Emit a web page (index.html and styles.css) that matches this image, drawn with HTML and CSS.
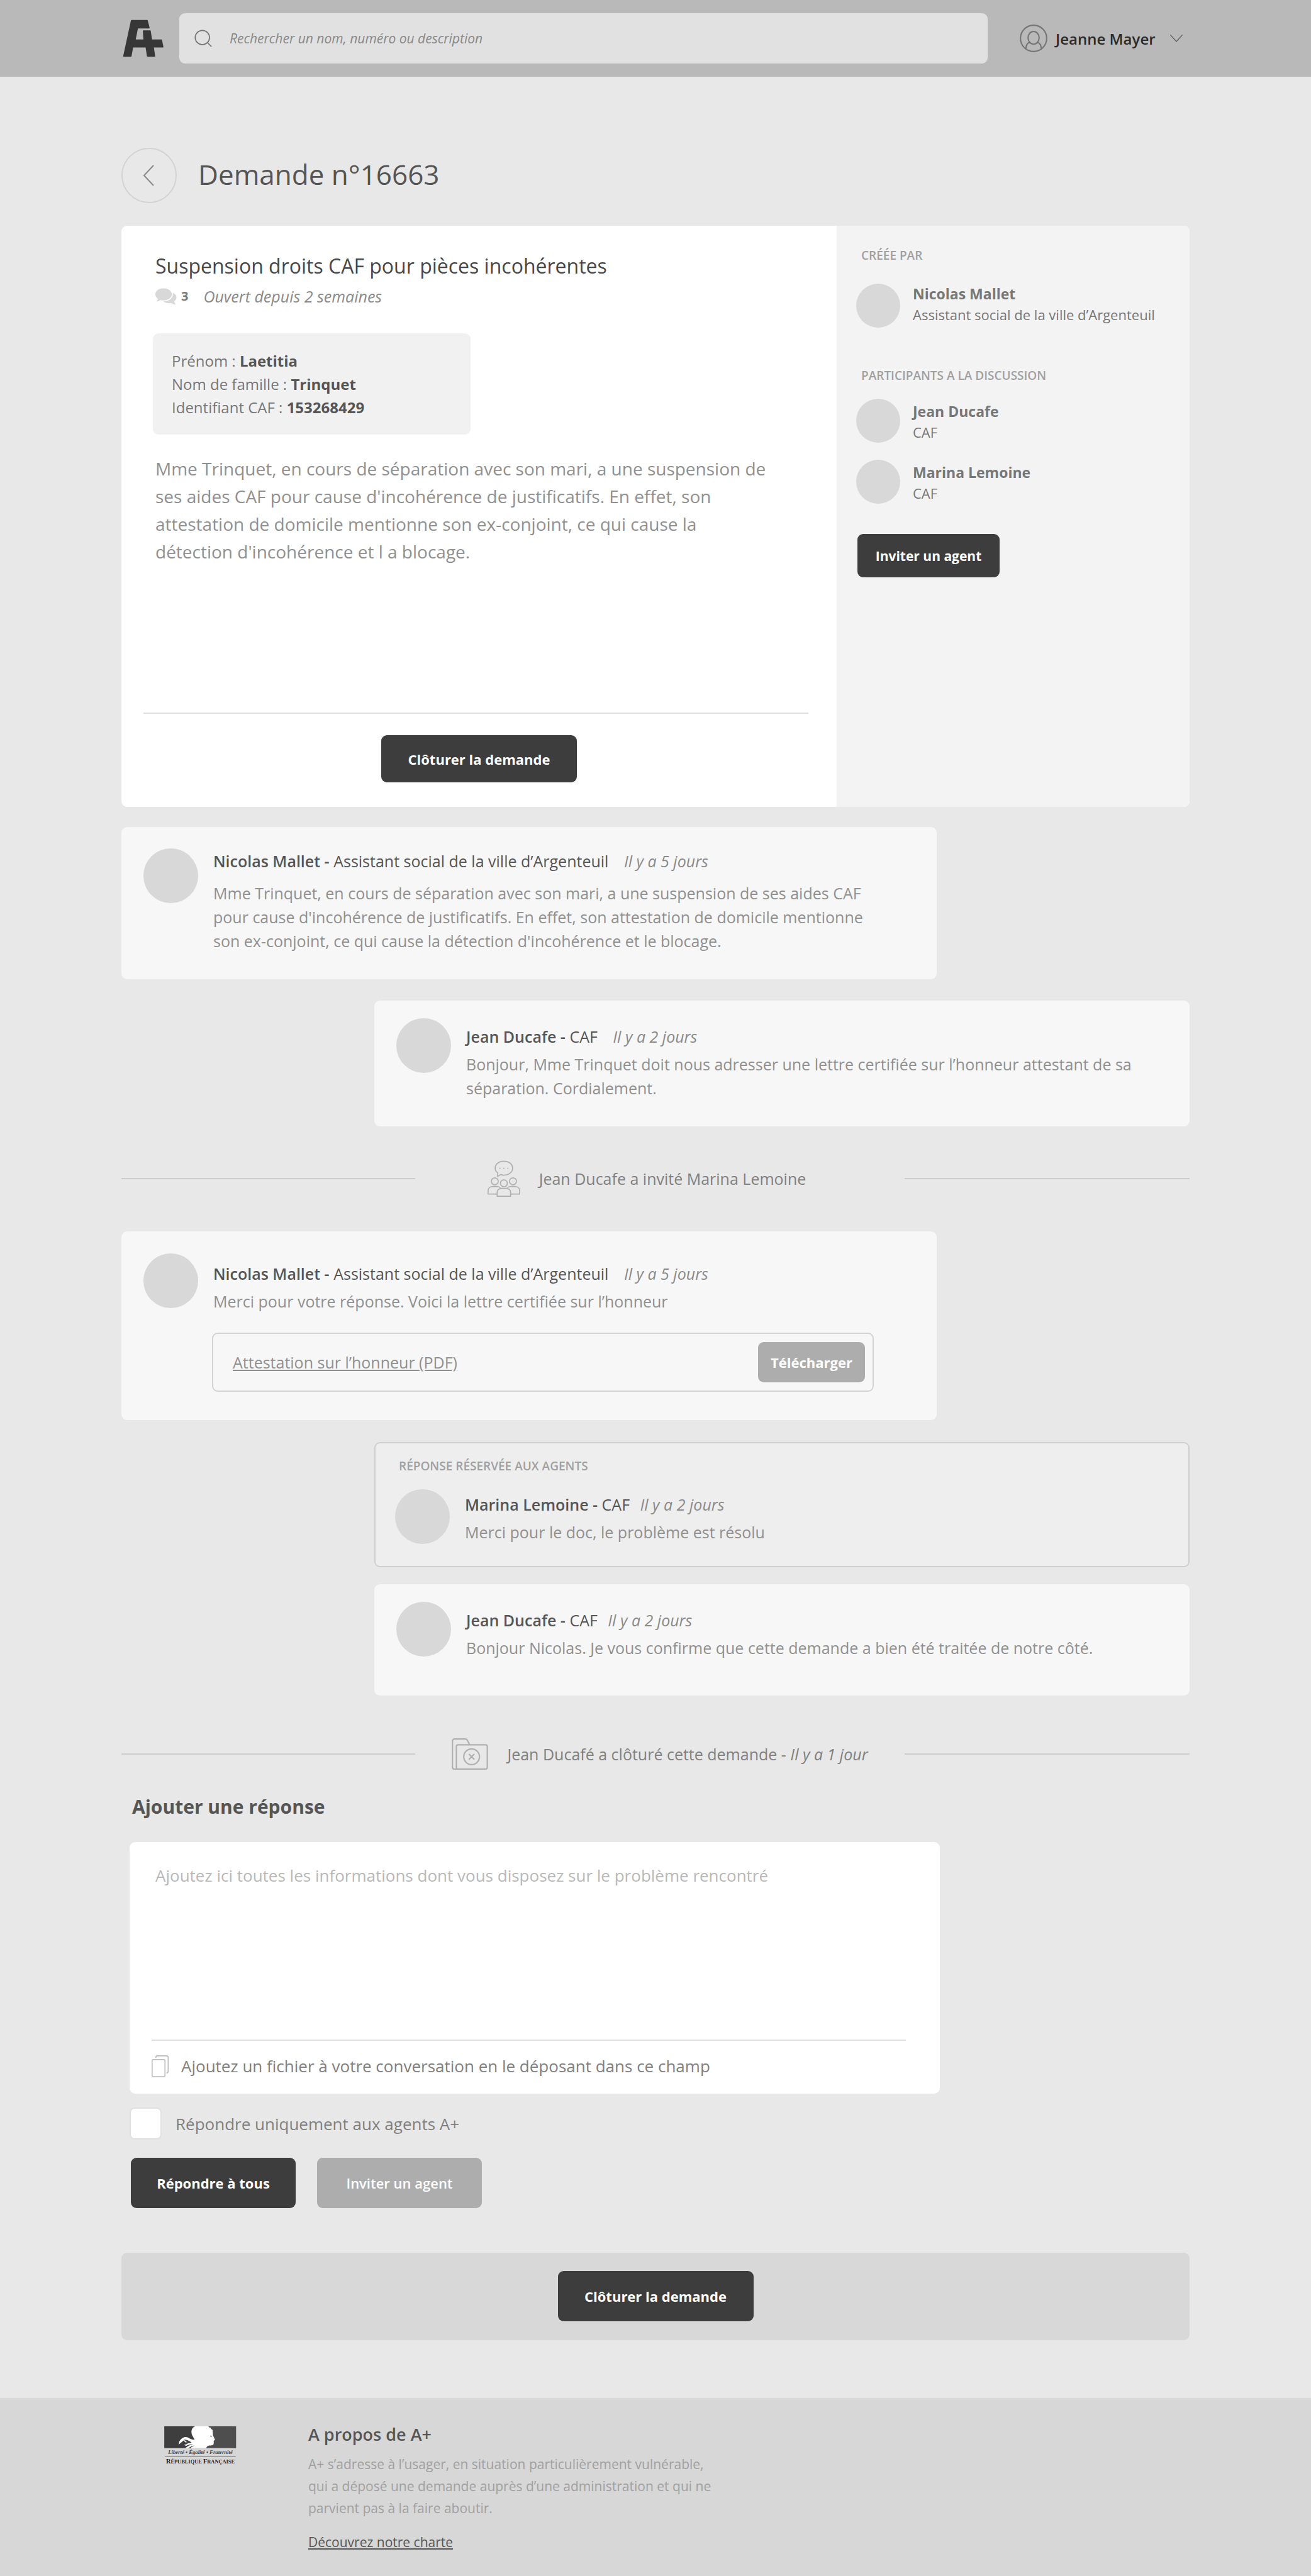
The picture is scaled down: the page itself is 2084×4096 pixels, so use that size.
FILE: index.html
```html
<!DOCTYPE html>
<html lang="fr">
<head>
<meta charset="utf-8">
<meta name="viewport" content="width=device-width, initial-scale=1">
<title>Demande n°16663 – A+</title>
<link rel="stylesheet" href="styles.css">
</head>
<body>
<header class="topbar">
  <div class="container topbar-inner">
    <a class="logo" href="#" aria-label="A+">
      <svg width="66" height="60" viewBox="-1 -1 77 70"><path d="M15.3 1H44.5L48 14.5H26.5L22 37H38.5L37.4 20H50L52.6 37H71L73.6 50H55.7L58.3 67H45L42.4 50H17.6L14.4 67H1Z" fill="#373737" stroke="#373737" stroke-width="2" stroke-linejoin="round"/></svg>
    </a>
    <label class="search">
      <svg width="28" height="28" viewBox="0 0 32 32" fill="none" stroke="#757575" stroke-width="2"><circle cx="14.5" cy="14.5" r="13"/><path d="M24 24l7 7"/></svg>
      <input type="search" placeholder="Rechercher un nom, numéro ou description" aria-label="Rechercher">
    </label>
    <button class="user" type="button">
      <svg width="44" height="44" viewBox="0 0 50 50" fill="none" stroke="#757575" stroke-width="2.4"><circle cx="25" cy="25" r="23.7"/><ellipse cx="25" cy="24" rx="10" ry="11.5"/><path d="M11 43.500c.5-6 3-10.500 7-11.500M39 43.500c-.5-6-3-10.500-7-11.500"/></svg>
      <span>Jeanne Mayer</span>
      <svg class="user-caret" width="20" height="12" viewBox="0 0 20 12" fill="none" stroke="#5f5f5f" stroke-width="1.2"><path d="M.5.5L10 11 19.500.5"/></svg>
    </button>
  </div>
</header>

<main class="container page">
  <div class="page-head">
    <a class="back" href="#" aria-label="Retour"><svg width="18" height="34" viewBox="0 0 18 34" fill="none" stroke="#8a8a8a" stroke-width="2"><path d="M17 1L2 17l15 16"/></svg></a>
    <h1>Demande n°16663</h1>
  </div>

  <section class="request">
    <div class="request-main">
      <div class="request-body">
        <h2>Suspension droits CAF pour pièces incohérentes</h2>
        <p class="request-meta">
          <svg width="34" height="27" viewBox="0 0 39 30" fill="#d8d8d8"><path d="M15 0C23.500 0 30 4.800 30 11S23.500 22 15 22c-2 0-4-.3-5.700-.8C7 22.800 4.500 23.800 1.800 24c1.500-1.500 2.600-3.200 3-5C1.800 17 0 14.200 0 11 0 4.800 6.500 0 15 0z"/><path d="M32 8.500c4 1.700 6.500 4.600 6.500 8 0 2.900-1.600 5.400-4.200 7.200.4 2.300 1.300 4.300 2.700 6.300-3.200-.4-5.800-1.700-8-3.200-1.300.3-2.700.4-4 .4-4.200 0-8-1.200-10.500-3.200C24 24 32 18.500 32 11z"/></svg>
          <strong>3</strong><em>Ouvert depuis 2 semaines</em>
        </p>
        <dl class="identity">
          <div><dt>Prénom :</dt> <dd>Laetitia</dd></div>
          <div><dt>Nom de famille :</dt> <dd>Trinquet</dd></div>
          <div><dt>Identifiant CAF :</dt> <dd>153268429</dd></div>
        </dl>
        <p class="request-text">Mme Trinquet, en cours de séparation avec son mari, a une suspension de<br>ses aides CAF pour cause d'incohérence de justificatifs. En effet, son<br>attestation de domicile mentionne son ex-conjoint, ce qui cause la<br>détection d'incohérence et l a blocage.</p>
      </div>
      <div class="request-actions"><button class="btn btn-wide" type="button">Clôturer la demande</button></div>
    </div>
    <aside class="request-side">
      <h3 class="label">CRÉÉE PAR</h3>
      <div class="person author"><span class="avatar"></span><p><strong>Nicolas Mallet</strong><span>Assistant social de la ville d’Argenteuil</span></p></div>
      <h3 class="label">PARTICIPANTS A LA DISCUSSION</h3>
      <div class="people">
        <div class="person"><span class="avatar"></span><p><strong>Jean Ducafe</strong><span>CAF</span></p></div>
        <div class="person"><span class="avatar"></span><p><strong>Marina Lemoine</strong><span>CAF</span></p></div>
      </div>
      <button class="btn btn-small" type="button">Inviter un agent</button>
    </aside>
  </section>

  <article class="message message-first">
    <span class="avatar avatar-large"></span>
    <div class="message-content">
      <h3><strong>Nicolas Mallet -</strong> Assistant social de la ville d’Argenteuil <em>Il y a 5 jours</em></h3>
      <p>Mme Trinquet, en cours de séparation avec son mari, a une suspension de ses aides CAF<br>pour cause d'incohérence de justificatifs. En effet, son attestation de domicile mentionne<br>son ex-conjoint, ce qui cause la détection d'incohérence et le blocage.</p>
    </div>
  </article>

  <article class="message message-right">
    <span class="avatar avatar-large"></span>
    <div class="message-content">
      <h3><strong>Jean Ducafe -</strong> CAF <em>Il y a 2 jours</em></h3>
      <p>Bonjour, Mme Trinquet doit nous adresser une lettre certifiée sur l’honneur attestant de sa<br>séparation. Cordialement.</p>
    </div>
  </article>

  <div class="event event-invite">
    <p>
      <svg width="52" height="58" viewBox="36 45 180 200" fill="#e8e8e8" stroke="#b0b0b0" stroke-width="6" stroke-linejoin="round"><path d="M92 114C82 107 78 98 78 88c0-22 21-39 48-39s48 17 48 39-21 38-48 38c-7 0-12-1-19-3-5 5-10 8-17 10 2-5 3-11 2-19z"/><path d="M101 88h6M123 88h6M145 88h6"/><circle cx="76" cy="160" r="19"/><circle cx="176" cy="160" r="19"/><path d="M39 230v-18c0-15 12-23 26-23h22c14 0 26 8 26 23v18zM213 230v-18c0-15-12-23-26-23h-22c-14 0-26 8-26 23v18z"/><circle cx="126" cy="171" r="19"/><path d="M89 242v-22c0-12 10-21 24-21h26c14 0 24 9 24 21v22z"/></svg>
      <span>Jean Ducafe a invité Marina Lemoine</span>
    </p>
  </div>

  <article class="message message-file">
    <span class="avatar avatar-large"></span>
    <div class="message-content">
      <h3><strong>Nicolas Mallet -</strong> Assistant social de la ville d’Argenteuil <em>Il y a 5 jours</em></h3>
      <p>Merci pour votre réponse. Voici la lettre certifiée sur l’honneur</p>
      <div class="attachment"><a href="#">Attestation sur l’honneur (PDF)</a><button class="btn btn-muted btn-download" type="button">Télécharger</button></div>
    </div>
  </article>

  <article class="message message-right message-private">
    <h4 class="label">RÉPONSE RÉSERVÉE AUX AGENTS</h4>
    <span class="avatar avatar-large"></span>
    <div class="message-content">
      <h3><strong>Marina Lemoine -</strong> CAF <em>Il y a 2 jours</em></h3>
      <p>Merci pour le doc, le problème est résolu</p>
    </div>
  </article>

  <article class="message message-right message-last">
    <span class="avatar avatar-large"></span>
    <div class="message-content">
      <h3><strong>Jean Ducafe -</strong> CAF <em>Il y a 2 jours</em></h3>
      <p>Bonjour Nicolas. Je vous confirme que cette demande a bien été traitée de notre côté.</p>
    </div>
  </article>

  <div class="event event-close">
    <p>
      <svg width="58" height="50" viewBox="0 0 67 58" fill="none" stroke="#b0b0b0" stroke-width="2.500" stroke-linejoin="round"><path d="M33 12L29 4c-1-2-2-2.700-4-2.700H5c-2 0-3.700 1.500-3.700 3.700v48c0 2 1.500 3.700 3.700 3.700"/><rect x="8.500" y="12" width="57" height="44.700" rx="3"/><path d="M5 56.700h5"/><circle cx="36.600" cy="34" r="14.500"/><path d="M31.600 29l10 10M41.600 29l-10 10"/></svg>
      <span>Jean Ducafé a clôturé cette demande - <em>Il y a 1 jour</em></span>
    </p>
  </div>

  <form class="reply">
    <h2>Ajouter une réponse</h2>
    <div class="editor">
      <textarea aria-label="Votre réponse" placeholder="Ajoutez ici toutes les informations dont vous disposez sur le problème rencontré"></textarea>
      <p class="drop">
        <svg width="28" height="35" viewBox="0 0 33 41" fill="none" stroke="#bdbdbd" stroke-width="2"><path d="M8 5V4a3 3 0 0 1 3-3h17a3 3 0 0 1 3 3v26a3 3 0 0 1-3 3"/><rect x="1" y="8" width="24" height="32" rx="2"/></svg>
        Ajoutez un fichier à votre conversation en le déposant dans ce champ
      </p>
    </div>
    <label class="check"><input type="checkbox">Répondre uniquement aux agents A+</label>
    <div class="reply-actions">
      <button class="btn" type="submit">Répondre à tous</button>
      <button class="btn btn-muted" type="button">Inviter un agent</button>
    </div>
  </form>

  <div class="closing"><button class="btn btn-wide" type="button">Clôturer la demande</button></div>
</main>

<footer class="footer">
  <div class="container footer-inner">
    <svg class="marianne" width="115" height="62" viewBox="30 42 396 214">
      <path d="M30 42h220v120H30z" fill="#3e3e3e"/><path d="M250 42h174v120H250z" fill="#4e4e4e"/>
      <path d="M200 42h72c3 5 7 7 14 9-2 3-1 6 8 10 4 4-1 8 2 13l1 16c3 9 8 16 11 25 1 5-5 3-7 6 2 4-2 5 1 8-2 3 0 6-1 10-2 8-14 9-24 8-9 1-14 5-17 15h-78c-8 0-9-2-3-5l16-10c-16 3-24 9-33 15h-18c12-8 25-17 45-23-15 1-28 5-40 11l-10-6 22-6c-10-3-19-9-24-19l-28 23 3-16c6-12 16-21 26-24 14-4 21 0 32 7 13 5 24 9 26 4-8-14-17-25-17-39 0-16 8-28 21-32z" fill="#fff"/>
      <path d="M136 116c12-3 24 2 44 14-12 7-25 4-35-3 8-1 10-3 9-5-5 0-12-2-18-6zM118 142l14-14 8 12c-9-2-15 0-22 2z" fill="#3e3e3e"/>
      <path d="M281 94c5-2 10 0 13 3l-5 1v5l-6-5z" fill="#8a8a8a"/>
      <text x="228" y="195" text-anchor="middle" font-size="30" font-style="italic" font-weight="700" fill="#444">Liberté • Égalité • Fraternité</text>
      <path d="M34 209h388" stroke="#555" stroke-width="3"/>
      <text x="228" y="246" text-anchor="middle" font-size="29" font-weight="700" fill="#1c1c1c"><tspan font-size="36">R</tspan>ÉPUBLIQUE <tspan font-size="36">F</tspan>RANÇAISE</text>
    </svg>
    <div class="about">
      <h2>A propos de A+</h2>
      <p>A+ s’adresse à l’usager, en situation particulièrement vulnérable,<br>qui a déposé une demande auprès d’une administration et qui ne<br>parvient pas à la faire aboutir.</p>
      <a href="#">Découvrez notre charte</a>
    </div>
  </div>
</footer>
</body>
</html>
```
FILE: styles.css
```css
*, *::before, *::after { box-sizing: border-box; }

body {
  margin: 0;
  background: #e8e8e8;
  color: #8a8a8a;
  font-family: "Open Sans", "Noto Sans", sans-serif;
  font-size: 25px;
  font-weight: 500;
}

h1, h2, h3, h4, p, dl, dd { margin: 0; }
h1, h2, h3, h4 { font-weight: 500; }
svg { display: block; flex: none; }
button, input, textarea { font: inherit; }

.container {
  width: 100%;
  max-width: 1698px;
  margin: 0 auto;
}

/* Top bar */
.topbar { background: #b9b9b9; padding: 21px 0; }
.topbar-inner { display: flex; align-items: center; }
.logo { padding: 0 24px 0 2px; }
.search {
  flex: 1;
  display: flex;
  align-items: center;
  gap: 28px;
  height: 80px;
  padding: 0 24px;
  background: #e1e1e1;
  border-radius: 9px;
}
.search input {
  flex: 1;
  min-width: 0;
  padding: 0;
  border: 0;
  outline: 0;
  background: none;
  color: #555;
  font-size: 21px;
  font-style: italic;
}
.search input::placeholder { color: #888; opacity: 1; }
.user {
  display: flex;
  align-items: center;
  gap: 13px;
  width: 270px;
  margin-left: 51px;
  padding: 0 11px 0 0;
  border: 0;
  background: none;
  color: #2b2b2b;
  font-size: 24px;
  font-weight: 600;
}
.user-caret { margin-left: auto; }

/* Page heading */
.page { padding-top: 113px; }
.page-head { display: flex; align-items: center; gap: 34px; }
.page-head h1 { padding-bottom: 4px; color: #555; font-size: 44px; font-weight: 400; }
.back {
  display: flex;
  align-items: center;
  justify-content: center;
  width: 88px;
  height: 88px;
  padding-right: 2px;
  border: 2px solid #d3d3d3;
  border-radius: 50%;
}

/* Buttons */
.btn {
  min-width: 262px;
  height: 80px;
  padding: 0 20px;
  border: 0;
  border-radius: 9px;
  background: #3d3d3d;
  color: #fff;
  font-size: 22px;
  font-weight: 700;
}
.btn-wide { min-width: 311px; }
.btn-small { min-width: 226px; height: 69px; font-size: 21px; }
.btn-muted { background: #adadad; font-weight: 600; }
.btn-download { min-width: 170px; height: 64px; font-weight: 700; }

.label {
  color: #a0a0a0;
  font-size: 19px;
  font-weight: 600;
  line-height: 24px;
}

.avatar {
  flex: none;
  width: 70px;
  height: 70px;
  border-radius: 50%;
  background: #d8d8d8;
}
.avatar-large { width: 87px; height: 87px; }

/* Request card */
.request {
  display: flex;
  margin-top: 36px;
  border-radius: 9px;
  overflow: hidden;
  background: #fff;
}
.request-main { flex: 1; padding: 44px 45px 39px 35px; }
.request-body { padding-left: 19px; }
.request-body h2 { color: #474747; font-size: 32px; line-height: 40px; }
.request-meta {
  display: flex;
  align-items: center;
  gap: 7px;
  margin-top: 10px;
  line-height: 36px;
}
.request-meta strong { font-size: 20px; color: #777; }
.request-meta em { margin-left: 17px; }
.identity {
  width: 505px;
  margin: 41px 0 0 -4px;
  padding: 25px 30px;
  border-radius: 9px;
  background: #f1f1f1;
  color: #777;
  font-size: 24px;
  line-height: 37px;
}
.identity dt, .identity dd { display: inline; }
.identity dd { color: #555; font-weight: 700; }
.request-text {
  min-height: 410px;
  margin-top: 32px;
  color: #909090;
  font-size: 28px;
  line-height: 44px;
}
.request-actions {
  display: flex;
  justify-content: center;
  padding-top: 34px;
  border-top: 2px solid #e0e0e0;
}
.request-actions .btn { height: 75px; margin-left: 10px; }

.request-side {
  width: 561px;
  padding: 35px 31px;
  background: #f3f3f3;
}
.request-side .label { padding-left: 8px; }
.person { display: flex; align-items: flex-end; gap: 20px; }
.person p { color: #777; font-size: 22px; line-height: 33px; }
.person strong { display: block; font-size: 23px; }
.author { align-items: flex-start; margin: 33px 0 64px; }
.people { display: grid; gap: 27px; margin: 25px 0 48px; }
.request-side .btn { margin-left: 2px; }

/* Conversation */
.message {
  display: flex;
  align-items: flex-start;
  gap: 24px;
  max-width: 1296px;
  margin-top: 34px;
  padding: 28px 35px 42px;
  border-radius: 9px;
  background: #f7f7f7;
}
.message-content { flex: 1; padding-top: 11px; }
.message h3 { color: #555; font-size: 25px; line-height: 36px; }
.message h3 strong { font-weight: 600; }
.message h3 em { margin-left: 18px; color: #8a8a8a; }
.message-content p { margin-top: 7px; color: #909090; line-height: 38px; }
.message-right { margin-left: auto; }

.message-first { margin-top: 32px; padding-top: 34px; }
.message-first .message-content { padding-top: 2px; }
.message-first .message-content p { margin-top: 14px; }

.message-file { margin-top: 55px; padding: 35px 35px 45px; }
.message-file .message-content { padding-top: 14px; }
.attachment {
  display: flex;
  align-items: center;
  justify-content: space-between;
  height: 94px;
  margin: 31px 65px 0 -2px;
  padding: 0 12px 0 31px;
  border: 2px solid #d3d3d3;
  border-radius: 9px;
}
.attachment a { color: #909090; }

.message-private {
  flex-wrap: wrap;
  margin-top: 35px;
  padding: 24px 31px 35px;
  border: 2px solid #cfcfcf;
  background: #eee;
}
.message-private .label { width: 100%; padding-left: 6px; margin-bottom: 1px; }
.message-private .message-content { padding-top: 6px; }
.message-last { margin-top: 27px; padding-bottom: 57px; }
.message-private h3 em, .message-last h3 em { margin-left: 10px; }

/* Events between messages */
.event {
  display: grid;
  grid-template-columns: 467fr 778fr 453fr;
  align-items: center;
  height: 58px;
  margin-top: 54px;
}
.event::before, .event::after { content: ""; height: 2px; background: #cdcdcd; }
.event p { display: flex; align-items: center; justify-content: center; gap: 30px; color: #808080; }
.event-invite p { padding-right: 42px; }
.event-close { margin-top: 64px; }

/* Reply form */
.reply { max-width: 1301px; margin-top: 35px; padding-left: 13px; }
.reply h2 { padding-left: 4px; color: #555; font-size: 30px; font-weight: 700; line-height: 40px; }
.editor {
  margin-top: 36px;
  padding: 0 54px 0 35px;
  border-radius: 9px;
  background: #fff;
}
.editor textarea {
  display: block;
  width: 100%;
  height: 316px;
  padding: 35px 0 0 6px;
  border: 0;
  border-bottom: 2px solid #e0e0e0;
  outline: 0;
  resize: none;
  background: none;
  color: #555;
  font-size: 26px;
  line-height: 36px;
}
.editor textarea::placeholder { color: #b8b8b8; opacity: 1; }
.drop {
  display: flex;
  align-items: center;
  gap: 19px;
  height: 84px;
  padding-bottom: 4px;
  color: #808080;
  font-size: 26px;
}
.check {
  display: flex;
  align-items: center;
  gap: 22px;
  width: max-content;
  margin-top: 22px;
  color: #808080;
  font-size: 26px;
}
.check input {
  appearance: none;
  width: 51px;
  height: 51px;
  margin: 0;
  border: 2px solid #e1e1e1;
  border-radius: 8px;
  background: #fff;
}
.reply-actions { display: flex; gap: 34px; margin: 29px 0 0 2px; }

.closing {
  display: flex;
  justify-content: center;
  margin-top: 71px;
  padding: 29px 0 30px;
  border-radius: 9px;
  background: #d8d8d8;
}

/* Footer */
.footer { margin-top: 92px; padding: 40px 0; background: #d7d7d7; }
.footer-inner { display: flex; align-items: flex-start; gap: 114px; padding-left: 68px; }
.marianne { margin-top: 5px; font-family: "Liberation Serif", serif; }
.about h2 { color: #555; font-size: 27px; font-weight: 600; line-height: 36px; }
.about p { margin: 12px 0 17px; color: #a0a0a0; font-size: 21px; line-height: 35px; }
.about a { display: inline-block; color: #555; font-size: 21px; line-height: 32px; }
```
